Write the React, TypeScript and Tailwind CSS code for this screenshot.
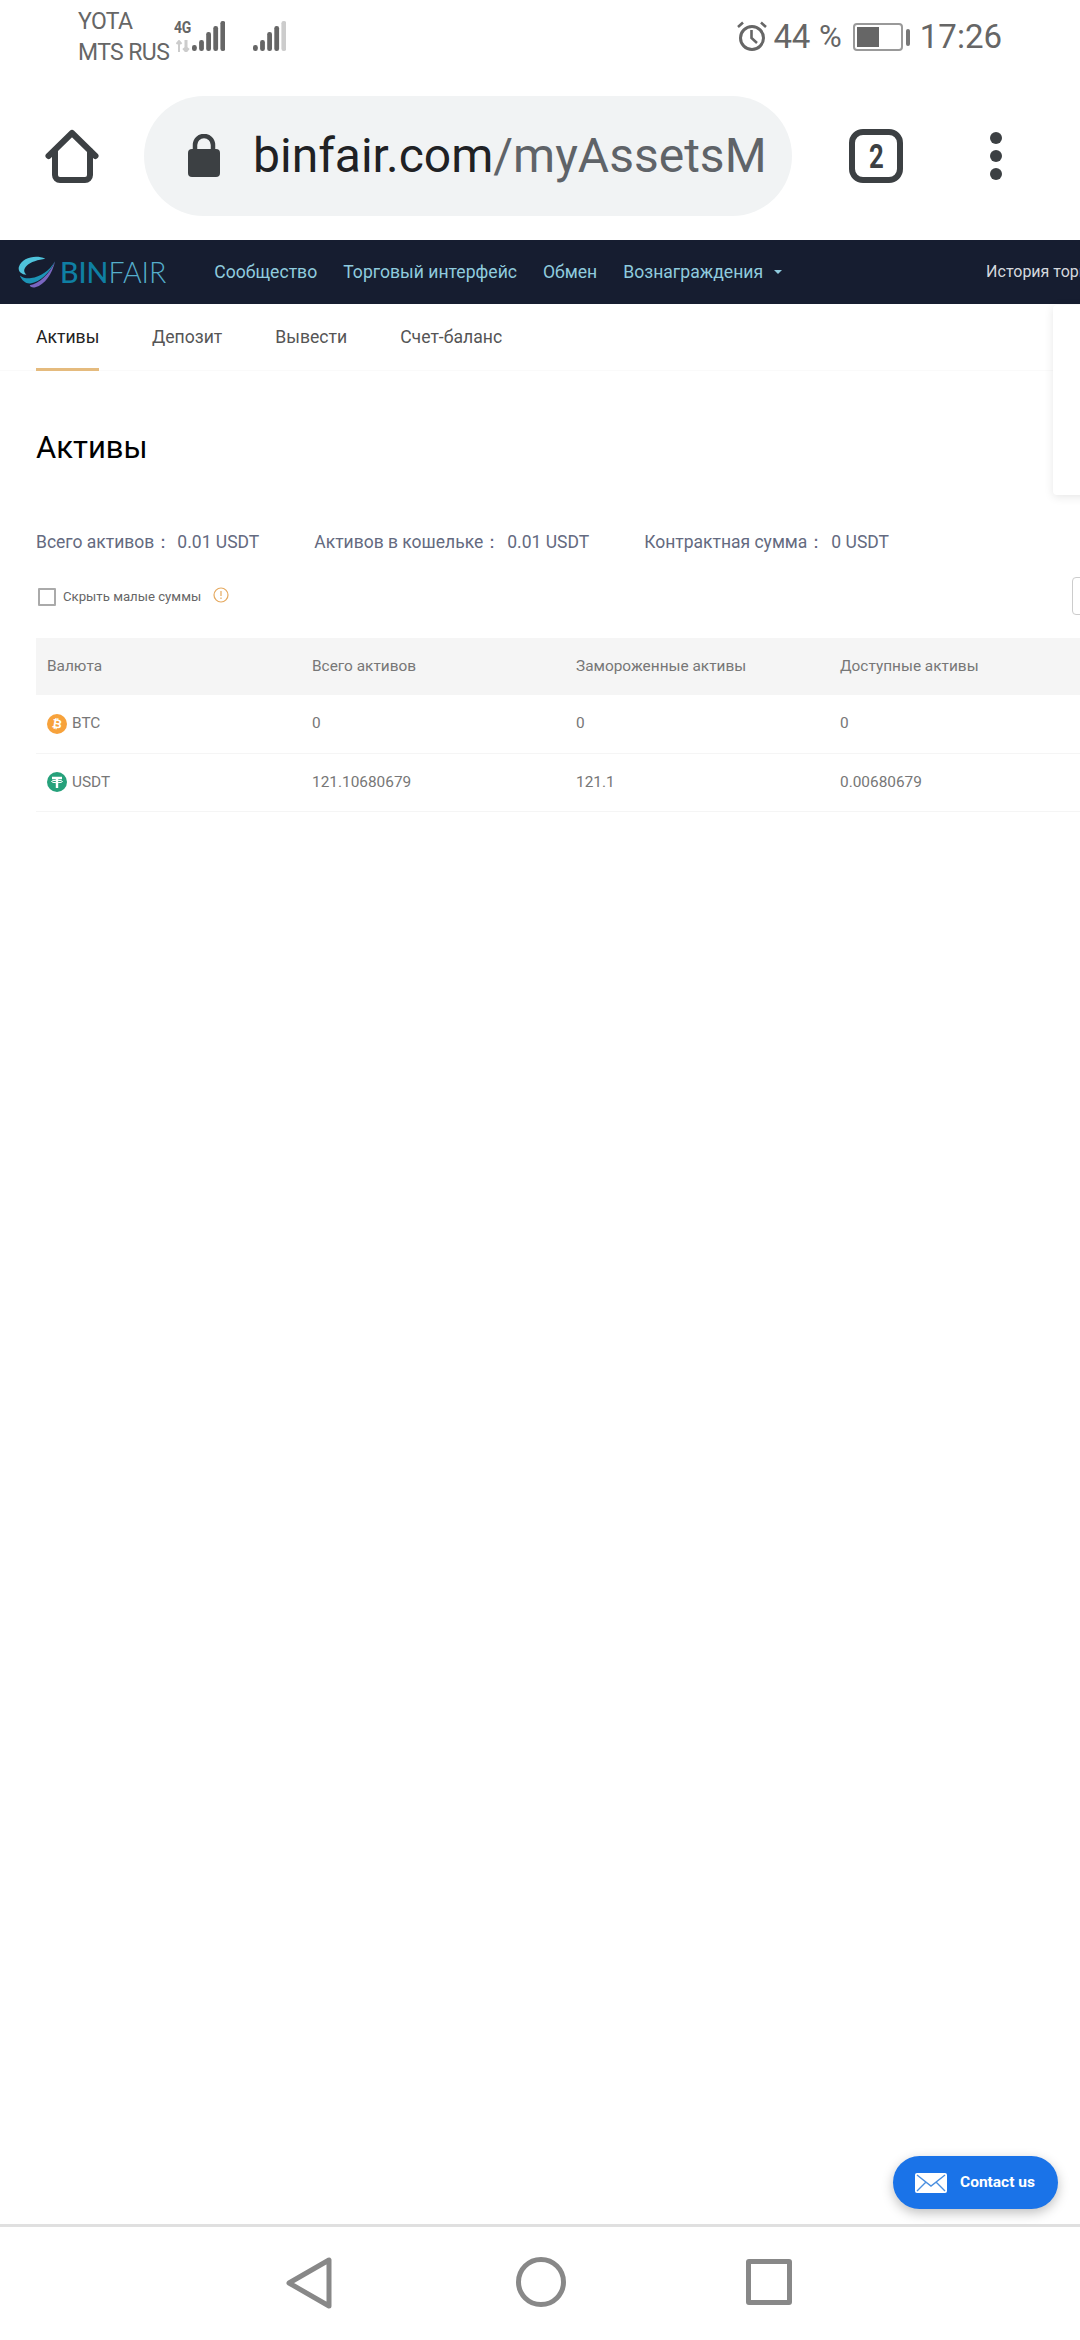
import React from "react";

const roboto = "font-['Roboto',sans-serif]";

function Bars({ dimLast }: { dimLast?: boolean }) {
  const heights = [6, 11, 19, 25, 30];
  return (
    <svg width="33" height="30" viewBox="0 0 33 30" className="block">
      {heights.map((h, i) => (
        <rect key={i} x={i * 7.1} y={30 - h} width="4.8" height={h} rx="2.2" fill={dimLast && i === 4 ? "#ccc" : "#666"} />
      ))}
    </svg>
  );
}

function StatusBar() {
  return (
    <div className="flex h-[78px] items-start pl-[78px] pr-[78px] text-[#666]">
      <div className="mt-[6px] flex w-[91px] flex-col whitespace-nowrap text-[23px] leading-[31px] tracking-[-0.6px]">
        <span>YOTA</span>
        <span>MTS RUS</span>
      </div>
      <div className="ml-[5px] mt-[21px] flex h-[31px] items-start">
        <div className="flex w-[18px] flex-col">
          <span className="block origin-left text-[17px] font-bold leading-[13px] tracking-[-0.3px] text-[#666] [transform:scaleX(0.82)]">4G</span>
          <svg width="14" height="12" viewBox="0 0 14 12" fill="none" stroke="#ccc" strokeWidth="2" className="mt-[6px] ml-[2px] block">
            <path d="M3 12V1M0.5 4L3 1l2.5 3" />
            <path d="M10 0v11M7.5 8L10 11l2.5-3" strokeWidth="3" />
          </svg>
        </div>
        <Bars />
      </div>
      <div className="ml-[28px] mt-[21px]">
        <Bars dimLast />
      </div>
      <div className="ml-auto mt-[19px] flex items-center">
        <svg width="32" height="32" viewBox="0 0 32 32" fill="none" stroke="#666" className="mt-[-2px] block">
          <circle cx="16" cy="18" r="11.5" strokeWidth="3" />
          <path d="M15.5 10v8l5.5 5" strokeWidth="2.6" />
          <path d="M2 7l5-4.5M30 7l-5-4.5" strokeWidth="2.6" />
        </svg>
        <span className="ml-[6px] text-[33px] leading-[36px] tracking-[-0.3px]">44</span>
        <span className="ml-[9px] text-[31px] leading-[36px]">%</span>
        <div className="ml-[11px] flex items-center">
          <div className="h-[28px] w-[50px] rounded-[4px] border-2 border-[#999] p-[2px]">
            <div className="h-full w-[22px] bg-[#666]" />
          </div>
          <div className="ml-[3px] h-[17px] w-[4px] rounded-[2px] bg-[#777]" />
        </div>
        <span className="ml-[10px] text-[33px] leading-[36px]">17:26</span>
      </div>
    </div>
  );
}

function AddressBar() {
  return (
    <div className="flex h-[162px] items-start pt-[18px]">
      <svg width="56" height="60" viewBox="0 0 56 60" fill="none" stroke="#3c4043" strokeWidth="6" strokeLinejoin="round" strokeLinecap="round" className="ml-[44px] mt-[31px] block">
        <path d="M4.5 29 L28 6 L51.5 29" />
        <path d="M11 24 V48 a5 5 0 0 0 5 5 H41 a5 5 0 0 0 5-5 V24" />
      </svg>
      <div className="ml-[44px] flex h-[120px] w-[648px] items-center overflow-hidden rounded-full bg-[#f1f3f4] pl-[44px]">
        <svg width="32" height="44" viewBox="0 0 32 44" className="block">
          <path d="M7 17v-6a9 9 0 0 1 18 0v6" fill="none" stroke="#3c4043" strokeWidth="4.5" />
          <rect x="0" y="15" width="32" height="28" rx="4" fill="#3c4043" />
        </svg>
        <span className="ml-[33px] whitespace-nowrap text-[48px] leading-none text-[#202124]">
          binfair.com<span className="text-[#5f6368]">/myAssetsM</span>
        </span>
      </div>
      <div className="ml-[57px] mt-[33px] flex h-[54px] w-[54px] items-center justify-center rounded-[14px] border-[6px] border-[#3c4043] text-[33px] font-bold leading-none text-[#3c4043]">
        <span className="[transform:scaleX(0.78)]">2</span>
      </div>
      <div className="ml-[87px] mt-[36px] flex flex-col gap-[6px]">
        <div className="h-[12px] w-[12px] rounded-full bg-[#3c4043]" />
        <div className="h-[12px] w-[12px] rounded-full bg-[#3c4043]" />
        <div className="h-[12px] w-[12px] rounded-full bg-[#3c4043]" />
      </div>
    </div>
  );
}

function Logo() {
  return (
    <div className="flex items-center pl-[17px]">
      <svg width="40" height="33" viewBox="20 25 120 100" className="block">
        <path d="M105 33 C75 20 35 30 25 58 C22 72 32 80 48 82 C40 74 38 66 48 55 C60 42 85 36 105 33 Z" fill="#4fc3dc" />
        <path d="M135 40 C118 70 90 88 62 92 C50 94 38 92 28 84 C34 100 48 110 60 108 C90 104 120 75 135 40Z" fill="#1c94b6" />
        <path d="M135 42 C125 80 105 112 75 120 C65 122 58 118 58 114 C88 108 118 80 135 42Z" fill="#7a66c0" />
      </svg>
      <span className="ml-[3px] font-['Lato',sans-serif] text-[28.5px] leading-none">
        <span className="font-medium text-[#0f7fa3]">BIN</span>
        <span className="font-light text-[#55aecb]">FAIR</span>
      </span>
    </div>
  );
}

function TopNav() {
  return (
    <div className="flex h-[64px] items-center overflow-hidden whitespace-nowrap bg-[#161d30] text-[17.6px] text-[#8fcbde]">
      <Logo />
      <span className="ml-[48px]">Сообщество</span>
      <span className="ml-[26px]">Торговый интерфейс</span>
      <span className="ml-[26px]">Обмен</span>
      <span className="ml-[26px]">Вознаграждения</span>
      <span className="ml-[11px] h-0 w-0 border-x-[4px] border-t-[4px] border-x-transparent border-t-[#8fcbde]" />
      <span className="ml-[204px] text-[16px] text-[#d5d8dd]">История торговли</span>
    </div>
  );
}

function Tabs() {
  const tabs = ["Депозит", "Вывести", "Счет-баланс"];
  return (
    <div className="flex h-[67px] items-start border-b border-[#fafafa] pl-[36px] text-[17.6px] text-[#555]">
      <div className="h-[67px] w-[63px] border-b-[3px] border-[#e5bb7e] pt-[21px] leading-[24px] text-[#222]">Активы</div>
      {tabs.map((t) => (
        <div key={t} className="ml-[53px] pt-[21px] leading-[24px]">
          {t}
        </div>
      ))}
    </div>
  );
}

function Stat({ label, value, gap, valueGap }: { label: string; value: string; gap: string; valueGap: string }) {
  return (
    <span className={`whitespace-nowrap ${gap}`}>
      {label}
      <span className={valueGap}>{value}</span>
    </span>
  );
}

function Coin({ kind }: { kind: "btc" | "usdt" }) {
  if (kind === "btc") {
    return (
      <div className="flex h-[20px] w-[20px] items-center justify-center rounded-full bg-[#f7a23b] text-[12px] font-bold leading-none text-white">
        <span className="[transform:rotate(10deg)]">₿</span>
      </div>
    );
  }
  return (
    <div className="flex h-[20px] w-[20px] items-center justify-center rounded-full bg-[#26a17b]">
      <svg width="14" height="14" viewBox="0 0 14 14" fill="none" stroke="#fff" strokeWidth="2.4" className="block">
        <path d="M2 3h10M7 3v10" />
        <ellipse cx="7" cy="6.5" rx="5.5" ry="1.2" strokeWidth="1" />
      </svg>
    </div>
  );
}

const rows = [
  { kind: "btc" as const, name: "BTC", total: "0", frozen: "0", free: "0" },
  { kind: "usdt" as const, name: "USDT", total: "121.10680679", frozen: "121.1", free: "0.00680679" },
];

function AssetsTable() {
  const cols = "grid grid-cols-[265px_264px_264px_264px] pl-[11px]";
  return (
    <div className="ml-[36px] mt-[31px] text-[15.4px] text-[#777]">
      <div className={`${cols} h-[57px] items-center bg-[#f5f5f5]`}>
        <span>Валюта</span>
        <span>Всего активов</span>
        <span>Замороженные активы</span>
        <span>Доступные активы</span>
      </div>
      {rows.map((r) => (
        <div key={r.name} className={`${cols} h-[58.5px] items-center border-b border-[#f5f5f5]`}>
          <span className="flex items-center gap-[5px]">
            <Coin kind={r.kind} />
            {r.name}
          </span>
          <span>{r.total}</span>
          <span>{r.frozen}</span>
          <span>{r.free}</span>
        </div>
      ))}
    </div>
  );
}

function Content() {
  return (
    <div className="flex-1">
      <Tabs />
      <h1 className="ml-[36px] mt-[57px] text-[31px] font-normal leading-[40px] text-black">Активы</h1>
      <div className="ml-[36px] mt-[62px] flex h-[24px] items-center text-[17.5px] leading-[24px] text-[#646a80]">
        <Stat label="Всего активов：" value="0.01 USDT" gap="" valueGap="ml-[5px]" />
        <Stat label="Активов в кошельке：" value="0.01 USDT" gap="ml-[55px]" valueGap="ml-[6px]" />
        <Stat label="Контрактная сумма：" value="0 USDT" gap="ml-[55px]" valueGap="ml-[6px]" />
      </div>
      <div className="ml-[38px] mt-[33px] flex h-[20px] items-center">
        <div className="h-[18px] w-[18px] rounded-[1px] border-2 border-[#aaa]" />
        <span className="ml-[7px] text-[13.2px] text-[#666]">Скрыть малые суммы</span>
        <svg width="16" height="16" viewBox="0 0 16 16" fill="none" stroke="#e5a95f" className="ml-[12px] mt-[-4px] block">
          <circle cx="8" cy="8" r="7" strokeWidth="1.2" />
          <path d="M8 4v5M8 10.5v1.5" strokeWidth="1.2" />
        </svg>
      </div>
      <AssetsTable />
    </div>
  );
}

function BottomNav() {
  return (
    <div className="flex h-[116px] items-start border-t-[3px] border-[#e0e0e0] pl-[286px] pt-[30px]">
      <svg width="46" height="52" viewBox="0 0 46 52" fill="none" stroke="#888" strokeWidth="5" strokeLinejoin="round" className="block">
        <path d="M3 26 L43 3 V49 Z" />
      </svg>
      <svg width="50" height="50" viewBox="0 0 50 50" fill="none" stroke="#888" strokeWidth="5" className="ml-[184px] block">
        <circle cx="25" cy="25" r="22.5" />
      </svg>
      <div className="ml-[180px] mt-[2px] h-[46px] w-[46px] rounded-[3px] border-[5px] border-[#888]" />
    </div>
  );
}

export default function App() {
  return (
    <div className={`relative flex h-[2340px] w-[1080px] flex-col overflow-hidden bg-white ${roboto}`}>
      <StatusBar />
      <AddressBar />
      <TopNav />
      <Content />
      <BottomNav />
      <div className="absolute left-[1053px] top-[305px] h-[190px] w-[60px] rounded-[4px] bg-white shadow-[0_2px_10px_rgba(0,0,0,0.1)]" />
      <div className="absolute left-[1072px] top-[577px] h-[38px] w-[40px] rounded-[4px] border border-[#ccc]" />
      <div className="absolute left-[893px] top-[2156px] flex h-[53px] w-[165px] items-center rounded-full bg-[#1a73e8] pl-[22px] shadow-[0_4px_12px_rgba(0,0,0,0.25)]">
        <svg width="32" height="20" viewBox="0 0 32 20" className="block">
          <rect width="32" height="20" rx="2" fill="#fff" />
          <path d="M2 2 L16 13 L30 2 M2 18 L11 9 M30 18 L21 9" fill="none" stroke="#4a8fe0" strokeWidth="1.4" />
        </svg>
        <span className="ml-[13px] whitespace-nowrap text-[15.5px] font-bold text-white">Contact us</span>
      </div>
    </div>
  );
}
